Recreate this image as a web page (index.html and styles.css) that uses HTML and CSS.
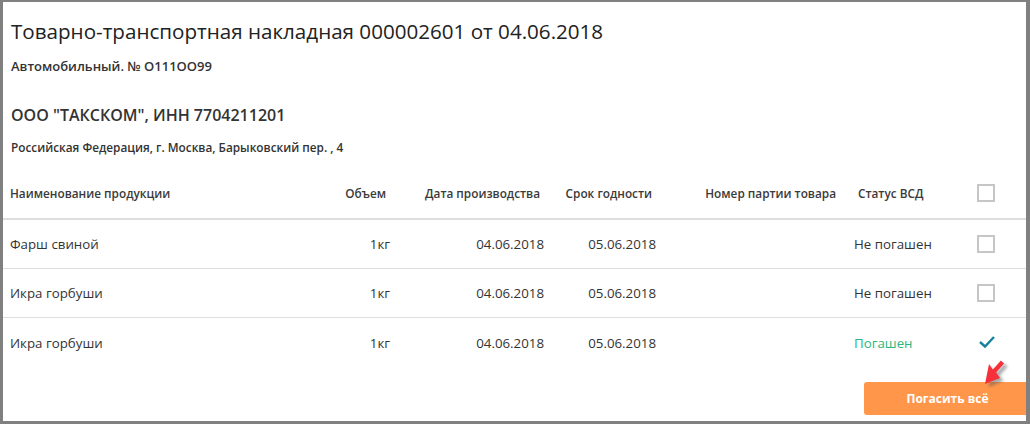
FILE: index.html
```html
<!DOCTYPE html>
<html lang="ru">
<head>
    <meta charset="UTF-8">
    <meta name="viewport" content="width=device-width, initial-scale=1.0">
    <title>ТТН</title>
    <link rel="stylesheet" href="styles.css">
</head>
<body>
    <div class="frame">
        <div class="info">
            <h1 class="title">Товарно-транспортная накладная 000002601 от 04.06.2018</h1>
            <div class="transport">Автомобильный. № О111ОО99</div>
            <div class="org">ООО "ТАКСКОМ", ИНН 7704211201</div>
            <div class="address">Российская Федерация, г. Москва, Барыковский пер. , 4</div>
        </div>

        <div class="table">
            <div class="row head">
                <div class="cell left">Наименование продукции</div>
                <div class="cell right">Объем</div>
                <div class="cell right">Дата производства</div>
                <div class="cell right">Срок годности</div>
                <div class="cell right">Номер партии товара</div>
                <div class="cell status">Статус ВСД</div>
                <div class="cell box"><span class="checkbox"></span></div>
            </div>
            <div class="row">
                <div class="cell left">Фарш свиной</div>
                <div class="cell right">1кг</div>
                <div class="cell right">04.06.2018</div>
                <div class="cell right">05.06.2018</div>
                <div class="cell right"></div>
                <div class="cell status">Не погашен</div>
                <div class="cell box"><span class="checkbox"></span></div>
            </div>
            <div class="row">
                <div class="cell left">Икра горбуши</div>
                <div class="cell right">1кг</div>
                <div class="cell right">04.06.2018</div>
                <div class="cell right">05.06.2018</div>
                <div class="cell right"></div>
                <div class="cell status">Не погашен</div>
                <div class="cell box"><span class="checkbox"></span></div>
            </div>
            <div class="row last">
                <div class="cell left">Икра горбуши</div>
                <div class="cell right">1кг</div>
                <div class="cell right">04.06.2018</div>
                <div class="cell right">05.06.2018</div>
                <div class="cell right"></div>
                <div class="cell status done">Погашен</div>
                <div class="cell box">
                    <svg class="check" width="18" height="14" viewBox="0 0 18 14">
                        <polyline points="2,7 7,11.5 16,2" fill="none" stroke="#17829b" stroke-width="2.4"/>
                    </svg>
                </div>
            </div>
        </div>

        <div class="footer">
            <button class="btn">Погасить всё</button>
            <svg class="arrow" width="40" height="40" viewBox="0 0 40 40">
                <defs>
                    <filter id="sh" x="-50%" y="-50%" width="200%" height="200%">
                        <feGaussianBlur stdDeviation="1.8"/>
                    </filter>
                </defs>
                <polygon points="10,32 14,12 17.9,17.5 25.9,8.6 29.1,11.6 21.1,20.5 25,26" fill="#555" opacity="0.5" filter="url(#sh)" transform="translate(3.5,3)"/>
                <polygon points="10,32 14,12 17.9,17.5 25.9,8.6 29.1,11.6 21.1,20.5 25,26" fill="#f5303a"/>
            </svg>
        </div>
    </div>
</body>
</html>
```

FILE: styles.css
```css
*{
    box-sizing: border-box;
}
body{
    margin: 0;
    font-family: "Open Sans", "Noto Sans", sans-serif;
    color: #333;
    background: #fff;
}
.frame{
    width: 1030px;
    height: 424px;
    border-style: solid;
    border-color: #808080;
    border-width: 2px 4px 3px 3px;
    position: relative;
    overflow: hidden;
}
.info{
    padding: 15px 0 0 8px;
}
.title{
    margin: 0;
    font-size: 20.6px;
    font-weight: 400;
    line-height: 28px;
    color: #222;
}
.transport{
    margin-top: 13px;
    font-size: 13px;
    font-weight: 600;
    line-height: 16px;
}
.org{
    margin-top: 30px;
    font-size: 16px;
    font-weight: 600;
    line-height: 22px;
}
.address{
    margin-top: 13px;
    font-size: 11.8px;
    font-weight: 600;
    line-height: 16px;
}
.table{
    margin-top: 13px;
}
.row{
    display: grid;
    grid-template-columns: 317px 72px 154px 112px 184px 118px 66px;
    height: 49px;
    border-bottom: 1px solid #dedede;
    font-size: 13.3px;
    align-items: center;
}
.row.head{
    height: 52px;
    border-bottom: 2px solid #dedede;
    font-size: 11.8px;
    font-weight: 600;
    color: #3a3a3a;
}
.row.last{
    border-bottom: none;
}
.cell{
    white-space: nowrap;
}
.left{
    padding-left: 7px;
}
.right{
    text-align: right;
    padding-right: 2px;
}
.head .right{
    padding-right: 6px;
}
.status{
    padding-left: 12px;
}
.head .status{
    padding-left: 16px;
}
.done{
    color: #2bb77e;
}
.box{
    padding-left: 17px;
    display: flex;
    align-items: center;
}
.checkbox{
    display: block;
    width: 18px;
    height: 18px;
    border: 2px solid #c6c6c6;
    background: #fff;
}
.check{
    display: block;
    margin-left: 1px;
    margin-top: -2px;
}
.footer{
    display: flex;
    justify-content: flex-end;
    margin-top: 15px;
}
.btn{
    width: 162px;
    height: 33px;
    border: none;
    border-radius: 3px 0 0 3px;
    background: #ff9649;
    color: #fff;
    font-family: "Open Sans", sans-serif;
    font-size: 12px;
    font-weight: 700;
    padding: 0 0 0 5px;
}
.arrow{
    position: absolute;
    right: 11px;
    bottom: 29px;
}
```
